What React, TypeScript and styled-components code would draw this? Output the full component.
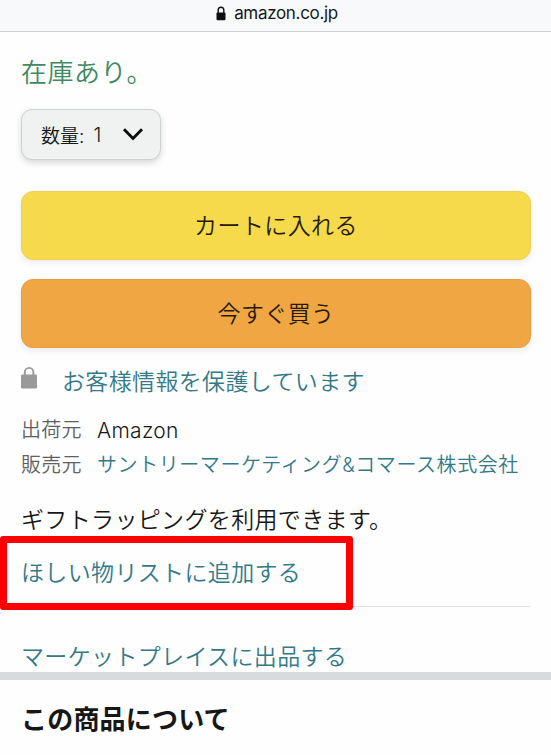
import React from "react";
import styled, { createGlobalStyle } from "styled-components";

const GlobalStyle = createGlobalStyle`
  * { box-sizing: border-box; }
  body { margin: 0; background: #fefefe; }
`;

const Page = styled.div`
  width: 551px;
  height: 755px;
  overflow: hidden;
  display: flex;
  flex-direction: column;
  background: #fefefe;
  color: #161818;
  font-family: Inter, "Noto Sans CJK JP", sans-serif;
  font-weight: 350;
  white-space: nowrap;
`;

const AddressBar = styled.header`
  height: 32px;
  flex: none;
  display: flex;
  justify-content: center;
  gap: 8px;
  padding: 0 0 0 3px;
  background: #f7f9fa;
  border-bottom: 1px solid #cdd0d2;
  font-weight: 400;
  font-size: 17px;
  line-height: 27px;
  letter-spacing: -0.32px;

  svg { margin-top: 6px; }
`;

const Offer = styled.main`
  height: 640px;
  flex: none;
  padding: 24px 21px 0;
`;

const Stock = styled.div`
  height: 34px;
  line-height: 34px;
  font-size: 26px;
  letter-spacing: 0.5px;
  color: #3f8a63;
`;

const Quantity = styled.button`
  display: flex;
  align-items: center;
  width: 140px;
  height: 51px;
  margin-top: 19px;
  padding: 0 16px 0 19px;
  border: 1px solid #cfd2d2;
  border-radius: 11px;
  background: #f0f2f2;
  box-shadow: 0 3px 6px rgba(20, 25, 25, 0.16);
  font: inherit;
  font-size: 19px;
  color: #161818;

  svg { margin-left: auto; }
`;

const Count = styled.span`
  margin-left: 9px;
  font-size: 20px;
`;

const Purchase = styled.button<{ $fill: string; $edge: string; $gap: number }>`
  display: block;
  width: 510px;
  height: 69px;
  margin-top: ${(p) => p.$gap}px;
  padding: 0 0 3px;
  border: 1px solid ${(p) => p.$edge};
  border-radius: 12px;
  background: ${(p) => p.$fill};
  box-shadow: 0 3px 6px rgba(20, 25, 25, 0.08);
  font: inherit;
  font-size: 23px;
  letter-spacing: 0.4px;
  color: #261a05;
`;

const Row = styled.div<{ $height: number; $gap?: number }>`
  display: flex;
  height: ${(p) => p.$height}px;
  line-height: ${(p) => p.$height}px;
  margin-top: ${(p) => p.$gap ?? 0}px;
  font-size: 23px;
  letter-spacing: 0.35px;
`;

const Link = styled.a`
  color: #347987;
`;

const SecureLink = styled(Link)`
  margin-left: 23px;
`;

const DetailRow = styled(Row)`
  font-size: 20px;
  letter-spacing: 0.25px;
`;

const Label = styled.span`
  width: 76px;
  color: #5d6163;
`;

const Shipper = styled.span`
  font-size: 21px;
  letter-spacing: 0.3px;
`;

const Seller = styled(Link)`
  letter-spacing: 0.57px;
`;

const WishList = styled.div`
  position: relative;
  height: 70px;
  padding-top: 19px;
  border-bottom: 1px solid #dfe1e2;
`;

const Highlight = styled.div`
  position: absolute;
  left: -21px;
  top: -1px;
  width: 353px;
  height: 74px;
  border: 7px solid #fe0000;
  border-radius: 3px;
`;

const Divider = styled.div`
  height: 8px;
  flex: none;
  background: #d7dbdd;
`;

const Heading = styled.h2`
  margin: 0;
  padding: 0 21px;
  height: 80px;
  line-height: 80px;
  font-size: 26px;
  font-weight: 700;
  letter-spacing: 0.2px;
`;

const SmallLock = () => (
  <svg width="10" height="15" viewBox="0 0 10 15">
    <path d="M2.2 7V4.1a2.8 2.8 0 0 1 5.6 0V7" fill="none" stroke="#0d0f10" strokeWidth="1.4" />
    <rect x="0.5" y="6.4" width="9" height="7.8" rx="1.2" fill="#0d0f10" />
  </svg>
);

const SecureLock = () => (
  <svg width="18" height="24" viewBox="0 0 18 24">
    <path d="M3.8 11V7.2a4.3 4.3 0 0 1 8.6 0V11" fill="none" stroke="#999" strokeWidth="1.9" />
    <rect x="0" y="9.4" width="16" height="14.2" rx="1.4" fill="#999" />
  </svg>
);

const Chevron = () => (
  <svg width="22" height="15" viewBox="0 0 22 15">
    <path d="M2 2.2 11 11.4 20 2.2" fill="none" stroke="#0c0e0e" strokeWidth="2.9" />
  </svg>
);

export default function App() {
  return (
    <Page lang="ja">
      <GlobalStyle />
      <AddressBar>
        <SmallLock />
        <span>amazon.co.jp</span>
      </AddressBar>
      <Offer>
        <Stock>在庫あり。</Stock>
        <Quantity>
          <span>数量:</span>
          <Count>1</Count>
          <Chevron />
        </Quantity>
        <Purchase $fill="#f7da4b" $edge="#ecd05a" $gap={31}>カートに入れる</Purchase>
        <Purchase $fill="#f0a743" $edge="#e79b45" $gap={19}>今すぐ買う</Purchase>
        <Row $height={34} $gap={17}>
          <SecureLock />
          <SecureLink>お客様情報を保護しています</SecureLink>
        </Row>
        <DetailRow $height={35} $gap={14}>
          <Label>出荷元</Label>
          <Shipper>Amazon</Shipper>
        </DetailRow>
        <DetailRow $height={35}>
          <Label>販売元</Label>
          <Seller>サントリーマーケティング&amp;コマース株式会社</Seller>
        </DetailRow>
        <Row $height={34} $gap={20}>ギフトラッピングを利用できます。</Row>
        <WishList>
          <Row $height={34}><Link>ほしい物リストに追加する</Link></Row>
          <Highlight />
        </WishList>
        <Row $height={34} $gap={33}><Link>マーケットプレイスに出品する</Link></Row>
      </Offer>
      <Divider />
      <Heading>この商品について</Heading>
    </Page>
  );
}
